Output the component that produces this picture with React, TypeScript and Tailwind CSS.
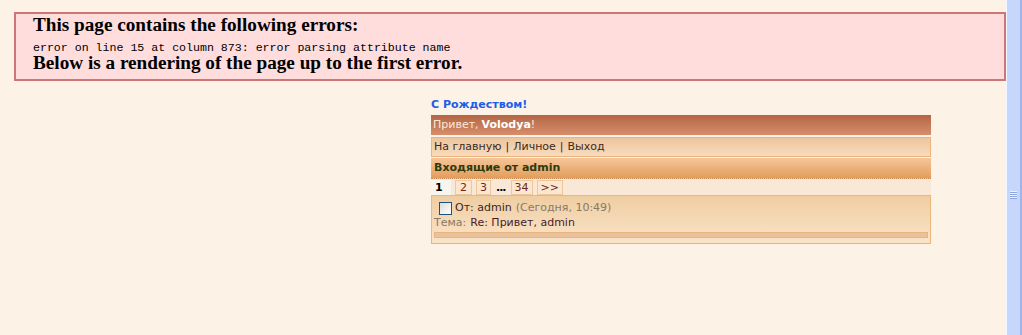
const ui = { fontFamily: '"DejaVu Sans", Verdana, sans-serif' }
const serif = { fontFamily: '"Liberation Serif", "Times New Roman", serif' }

function Scrollbar() {
  return (
    <div className="absolute right-0 top-0 h-[335px] w-[16px] bg-[#c7d6fb] border-l border-[#f4f7ff]">
      <div className="absolute right-0 top-0 h-full w-[2px] bg-[#9fb4e8]" />
      <div className="absolute left-[3px] top-[191px] flex flex-col gap-[1px]">
        {[0, 1, 2, 3].map((i) => (
          <div key={i} className="w-[7px] h-[1px] bg-[#eef3ff] shadow-[0_1px_0_#8ea6e0]" />
        ))}
      </div>
    </div>
  )
}

function ErrorBox() {
  return (
    <div className="mt-[12px] ml-[14px] w-[992px] h-[69px] border-2 border-[#c77] bg-[#fdd] pl-[17px] text-black">
      <div className="font-bold text-[19.2px] leading-[22px]" style={serif}>
        This page contains the following errors:
      </div>
      <div className="mt-[3.5px] text-[11.6px] leading-[16px]" style={{ fontFamily: '"Liberation Mono", monospace' }}>
        error on line 15 at column 873: error parsing attribute name
      </div>
      <div className="font-bold text-[19.2px] leading-[13px]" style={serif}>
        Below is a rendering of the page up to the first error.
      </div>
    </div>
  )
}

export default function App() {
  return (
    <div className="relative w-[1022px] h-[335px] overflow-hidden bg-[#fcf2e5]">
      <ErrorBox />

      <div className="ml-[431px] mt-[15px] w-[500px] text-[11px]" style={ui}>
        <div className="font-bold leading-[18px] text-[#1d5ee8]">С Рождеством!</div>

        {/* greeting */}
        <div className="h-[20px] mt-[1px] px-[2px] flex items-center bg-gradient-to-b from-[#b46644] to-[#d68e6b] text-[#fbe9dd]">
          Привет, <b className="text-white ml-[3px]">Volodya</b>!
        </div>

        {/* nav */}
        <div className="h-[20px] mt-[2px] px-[2px] flex items-center border border-[#ecb47c] bg-gradient-to-b from-[#edc59c] to-[#f7dcbe] text-[#3b2a1a]">
          На главную <span className="mx-[4px] text-[#5a1040]">|</span> Личное <span className="mx-[4px] text-[#5a1040]">|</span> Выход
        </div>

        {/* inbox title */}
        <div className="h-[21px] mt-[1px] px-[3px] flex items-center bg-gradient-to-b from-[#f5c698] to-[#e39d5c] border-b border-dotted border-[#c88a50] font-bold text-[#2e3a0e]">
          Входящие от admin
        </div>

        {/* pages */}
        <div className="h-[16px] flex items-center gap-[4px] bg-[#f8e8d5] leading-none">
          <span className="h-[15px] w-[20px] pl-[4px] flex items-center bg-[#f8f4ee] font-bold text-black">1</span>
          <span className="h-[15px] px-[4px] flex items-center border border-[#efc79c] bg-[#fbe7d1] text-[#6a2a1a]">2</span>
          <span className="h-[15px] px-[3px] flex items-center border border-[#efc79c] bg-[#fbe7d1] text-[#6a2a1a]">3</span>
          <span className="font-bold text-black tracking-[-1px] mx-[1px]">...</span>
          <span className="h-[15px] px-[3px] flex items-center border border-[#efc79c] bg-[#fbe7d1] text-[#6a2a1a]">34</span>
          <span className="h-[15px] px-[3px] flex items-center border border-[#efc79c] bg-[#fbe7d1] text-[#6a2a1a]">&gt;&gt;</span>
        </div>

        {/* message */}
        <div className="h-[49px] border border-[#ebb67c] bg-gradient-to-b from-[#efcda2] to-[#fbe4c9] px-[2px] pt-[5px]">
          <div className="flex items-center h-[15px] pl-[5px]">
            <span className="w-[13px] h-[13px] border border-[#1c5180] bg-gradient-to-br from-[#dcdcd6] to-white mr-[3px]" />
            <span className="text-[#3a2818]">От: admin</span>
            <span className="ml-[4px] text-[#8a7866]">(Сегодня, 10:49)</span>
          </div>
          <div className="h-[14px] flex items-center">
            <span className="text-[#8a7866]">Тема:</span>
            <span className="ml-[4px] text-[#4a1a28]">Re: Привет, admin</span>
          </div>
          <div className="mt-[2px] h-[6px] border border-[#e9b47e] bg-[#e7c29c]" />
        </div>
      </div>

      <Scrollbar />
    </div>
  )
}
